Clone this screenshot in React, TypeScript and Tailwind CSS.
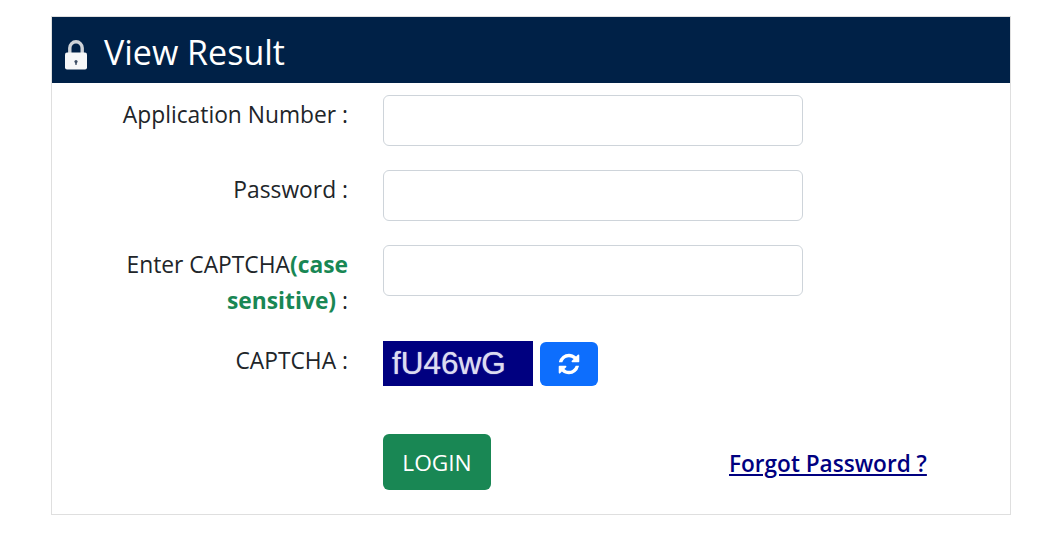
import React from "react";

function LockIcon() {
  return (
    <svg width="24" height="31" viewBox="0 0 24 31" className="mt-[10px] shrink-0">
      <path d="M6.8 15V8a6.2 6.2 0 0 1 12.4 0v7" fill="none" stroke="#cfd3d8" strokeWidth="3.4" />
      <rect x="2" y="12.5" width="22" height="17" rx="2" fill="#f6f7f8" />
      <circle cx="13" cy="21.5" r="1.6" fill="#3d4e64" />
      <rect x="12.2" y="22" width="1.6" height="2.8" fill="#3d4e64" />
    </svg>
  );
}

function RefreshIcon() {
  return (
    <svg viewBox="0 0 1792 1792" className="h-[24px] w-[24px]" fill="currentColor">
      <path d="M1639 1056q0 5-1 7-64 268-268 434.5t-478 166.5q-146 0-282.5-55t-243.5-157l-129 129q-19 19-45 19t-45-19-19-45v-448q0-26 19-45t45-19h448q26 0 45 19t19 45-19 45l-137 137q71 66 161 102t187 36q134 0 250-65t186-179q11-17 53-117 8-23 30-23h192q13 0 22.5 9.5t9.5 22.5zm25-800v448q0 26-19 45t-45 19h-448q-26 0-45-19t-19-45 19-45l138-138q-148-137-349-137-134 0-250 65t-186 179q-11 17-53 117-8 23-30 23h-199q-13 0-22.5-9.5t-9.5-22.5v-7q65-268 270-434.5t480-166.5q146 0 284 55.5t245 156.5l130-129q19-19 45-19t45 19 19 45z" />
    </svg>
  );
}

function FormRow({ label, className = "" }: { label: React.ReactNode; className?: string }) {
  return (
    <div className={`flex items-start ${className}`}>
      <label className="w-[296px] pt-[2px] text-right text-[22.8px] leading-[36px] text-[#212529]">{label}</label>
      <input type="text" className="ml-[35px] h-[51px] w-[420px] rounded-md border border-[#ced4da] bg-white" />
    </div>
  );
}

export default function App() {
  return (
    <div className="min-h-[536px] bg-white pt-4 pl-[51px] font-['Open_Sans','Noto_Sans',sans-serif]">
      <div className="h-[499px] w-[960px] border border-[#dfdfdf]">
        <div className="flex h-[66px] items-center gap-[17px] bg-[#002147] pl-[11px]">
          <LockIcon />
          <h1 className="pt-[3px] text-[34px] leading-none text-white">View Result</h1>
        </div>

        <FormRow label="Application Number :" className="mt-3" />
        <FormRow label="Password :" className="mt-6" />
        <FormRow
          className="mt-6"
          label={
            <>
              Enter CAPTCHA<b className="text-[#198754]">(case sensitive)</b> :
            </>
          }
        />

        <div className="mt-[22px] flex items-start">
          <span className="w-[296px] pt-[2px] text-right text-[22.8px] leading-[36px] text-[#212529]">CAPTCHA :</span>
          <div className="ml-[35px] flex h-[45px] w-[150px] items-center bg-[#000080] pl-[9px] font-['Liberation_Sans',sans-serif] text-[31.5px] leading-none text-[#dcdcf0] [text-shadow:0_0_1px_#c8c8e8]">
            fU46wG
          </div>
          <button className="mt-[1px] ml-[7px] flex h-[44px] w-[58px] items-center justify-center rounded-md bg-[#0d6efd] text-white">
            <RefreshIcon />
          </button>
        </div>

        <div className="mt-[48px] flex items-center">
          <button className="ml-[331px] h-[56px] w-[108px] rounded-md bg-[#198754] pt-[3px] text-[22.7px] text-white">LOGIN</button>
          <a href="#" className="ml-[238px] pt-[4px] text-[22.6px] font-semibold text-[#000080] underline">
            Forgot Password ?
          </a>
        </div>
      </div>
    </div>
  );
}
